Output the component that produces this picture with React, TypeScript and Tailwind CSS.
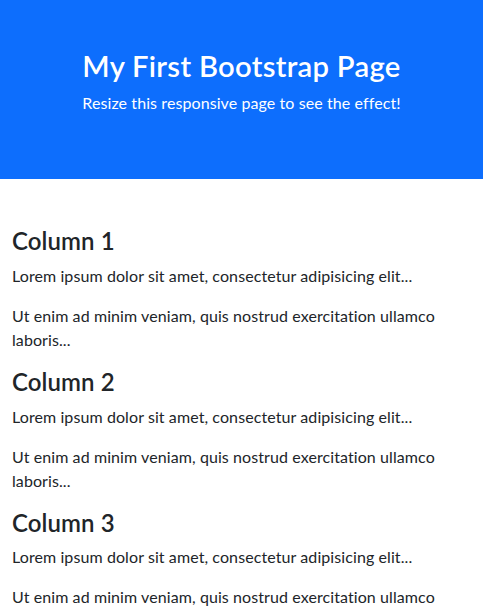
function Column({ n }: { n: number }) {
  return (
    <div>
      <h2 className="mb-2 text-[24px] font-semibold leading-[1.2]">Column {n}</h2>
      <p className="mb-4">Lorem ipsum dolor sit amet, consectetur adipisicing elit...</p>
      <p className="mb-4">Ut enim ad minim veniam, quis nostrud exercitation ullamco laboris...</p>
    </div>
  );
}

export default function App() {
  return (
    <div className="text-[16px] leading-[1.5] text-[#212529] tracking-[0.09px]" style={{ fontFamily: "Lato, sans-serif" }}>
      <div className="bg-[#0d6efd] p-12 text-center text-white">
        <h1 className="mb-2 text-[29.2px] font-semibold leading-[1.2] tracking-[0.3px]">My First Bootstrap Page</h1>
        <p className="mb-4">Resize this responsive page to see the effect!</p>
      </div>
      <div className="mt-12 px-3">
        <Column n={1} />
        <Column n={2} />
        <Column n={3} />
      </div>
    </div>
  );
}
